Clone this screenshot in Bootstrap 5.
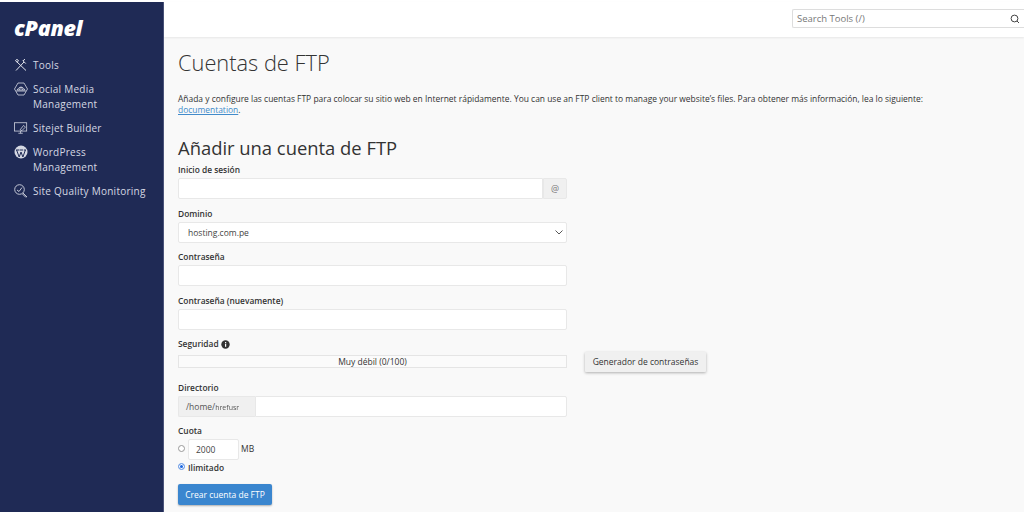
<!DOCTYPE html>
<html lang="es">
<head>
<meta charset="UTF-8">
<title>Cuentas de FTP</title>
<link href="https://cdn.jsdelivr.net/npm/bootstrap@5.3.2/dist/css/bootstrap.min.css" rel="stylesheet">
<style>
html, body { height: 512px; overflow: hidden; }
body { font-family: "Open Sans", sans-serif; font-size: 9px; background: #fff; color: #333; }
.page-wrap { height: 512px; padding-top: 2px; }
.side-bar { width: 164px; background: #1f2a55; color: #d5d8e3; border-right: 1px solid #4a5379; flex: none; }
.brand-logo { font-family: "Open Sans", sans-serif; font-weight: 800; font-style: italic; font-size: 21.5px; color: #fff; line-height: 20px; padding: 16px 0 0 14px; height: 56px; letter-spacing: -.3px; }
.side-item { display: flex; gap: 5px; padding-left: 14px; font-size: 10px; letter-spacing: .25px; line-height: 15px; margin-bottom: 9px; }
.side-item svg { flex: none; width: 14px; height: 14px; }
.top-strip { height: 35px; background: #fff; box-shadow: 0 1px 2px rgba(0,0,0,.08); flex: none; position: relative; }
.search-box { width: 232px; height: 19px; margin-top: 7px; border: 1px solid #ddd; border-right: 0; border-radius: 2px 0 0 2px; font-size: 9.5px; color: #777; padding: 0 4px; line-height: 17px; }
.main-area { background: #f9f9f9; min-width: 0; }
.content-pane { padding: 0 14px; width: 417px; }
.title-one { font-size: 21.8px; font-weight: 300; color: #333; line-height: 32px; margin: 10px 0 0; white-space: nowrap; }
.intro-text { width: 800px; font-size: 8.45px; line-height: 11px; margin: 14px 0 0; color: #333; }
.intro-text a { color: #428bca; }
.title-two { font-size: 18.4px; font-weight: 500; color: #333; line-height: 26px; margin: 20px 0 3px; white-space: nowrap; }
.field-label { font-size: 8.4px; font-weight: 600; line-height: 11px; color: #333; display: block; margin-bottom: 3px; }
.field-group { margin-bottom: 8.6px; }
.field-input { height: 21px; border: 1px solid #e8e8e8; border-radius: 2px; background: #fff; font-size: 8.5px; line-height: 19px; padding: 0 9px; color: #444; }
.select-input { padding-right: 3px; }
.addon-box { width: 24px; background: #f0f0f0; border: 1px solid #e8e8e8; border-radius: 0 2px 2px 0; color: #777; text-align: center; line-height: 19px; height: 21px; }
.meter-label { margin-bottom: 6px; }
.meter-group { margin-top: -.5px; margin-bottom: 13.5px; }
.meter-box { height: 13px; border: 1px solid #e5e5e5; background: #fbfbfb; text-align: center; font-size: 8.5px; line-height: 11px; color: #333; }
.gen-btn { position: absolute; left: 407px; top: -3px; height: 20px; width: 121px; background: #f0f0f0; border: 0; border-radius: 1px; box-shadow: 0 1px 3px rgba(0,0,0,.3); font-size: 8.5px; line-height: 20px; text-align: center; color: #333; white-space: nowrap; padding: 0; }
.prefix-box { width: 77px; background: #f0f0f0; border: 1px solid #e8e8e8; border-right: 0; height: 21px; line-height: 19px; padding-left: 7px; font-size: 8.5px; color: #555; border-radius: 2px 0 0 2px; }
.fuzzy-text { filter: blur(.7px); font-size: 7px; }
.quota-row { gap: 3px; }
.quota-input { width: 51px; height: 21px; border: 1px solid #e8e8e8; border-radius: 2px; background: #fff; line-height: 19px; padding-left: 7px; font-size: 8.5px; color: #444; }
.quota-unit { margin-left: -1px; font-size: 8.5px; }
.radio-dot { width: 7px; height: 7px; border-radius: 50%; border: 1px solid #999; background: #fff; flex: none; margin-top: -2px; }
.radio-on { border: 1px solid #7fa9e8; background: #1a66e0; box-shadow: inset 0 0 0 1px #fff; }
.unlimited-row { margin-top: 1.5px; }
.create-btn { background: #3a86cf; color: #fff; border: 0; border-radius: 2px; height: 21px; width: 94px; font-size: 8.5px; line-height: 21px; padding: 0; box-shadow: 0 1px 2px rgba(0,0,0,.3); white-space: nowrap; margin-top: 11.5px; }
</style>
</head>
<body>
<div class="d-flex page-wrap">
  <nav class="side-bar">
    <div class="brand-logo">cPanel</div>
    <div class="side-item">
      <svg viewBox="0 0 14 14" fill="none" stroke="#e4e6ee" stroke-width="1"><path d="M2 12.5 L10 4 M8.8 2.6 L11.8 5.6 M9 2.8 L11 1.2 M2.5 3.5 L12 12.5 M1.5 2.8 L3 1.2 L4.5 3 L3 4.2 Z"/></svg>
      <span>Tools</span>
    </div>
    <div class="side-item">
      <svg viewBox="0 0 14 14" fill="none" stroke="#d5d8e3" stroke-width=".8"><path d="M4 1 H10 L13.5 7 L10 13 H4 L.5 7 Z"/><path d="M3 8 Q7 2 11 8 Z M5 8 L7 5 L9 8"/><path d="M2 9 H12"/></svg>
      <span>Social Media<br>Management</span>
    </div>
    <div class="side-item">
      <svg viewBox="0 0 16 14" fill="none" stroke="#d5d8e3" stroke-width=".9"><rect x=".5" y="1" width="14" height="9.5"/><path d="M5 13 H10 M7.5 10.5 V13 M7 9 L11 4 L13 6 L9 10 Z"/></svg>
      <span>Sitejet Builder</span>
    </div>
    <div class="side-item">
      <svg viewBox="0 0 14 14"><circle cx="7" cy="7" r="6.5" fill="#d5d8e3"/><path d="M2.6 5 L5.2 12 L7 7 L8.9 12 L11.4 5 M2 5 H5.5 M6 5 H9.2 M10 5 H12" fill="none" stroke="#1f2a55" stroke-width="1"/></svg>
      <span>WordPress<br>Management</span>
    </div>
    <div class="side-item">
      <svg viewBox="0 0 14 14" fill="none" stroke="#d5d8e3" stroke-width=".9"><circle cx="5.5" cy="5.5" r="4.8"/><path d="M3 6 L5 7.5 L8 3.5 M9 9 L13 13 M8.5 10 L12 13.5"/></svg>
      <span>Site Quality Monitoring</span>
    </div>
  </nav>
  <div class="main-area flex-grow-1 d-flex flex-column">
    <header class="top-strip d-flex justify-content-end">
      <div class="search-box d-flex justify-content-between align-items-center">
        <span>Search Tools (/)</span>
        <svg width="10" height="10" viewBox="0 0 10 10" fill="none" stroke="#444" stroke-width="1"><circle cx="4.5" cy="4.5" r="3.4"/><path d="M7 7 L9 9"/></svg>
      </div>
    </header>
    <main class="content-pane">
      <h1 class="title-one">Cuentas de FTP</h1>
      <p class="intro-text">Añada y configure las cuentas FTP para colocar su sitio web en Internet rápidamente. You can use an FTP client to manage your website’s files. Para obtener más información, lea lo siguiente: <a href="#">documentation</a>.</p>
      <h2 class="title-two">Añadir una cuenta de FTP</h2>
      <div class="field-group">
        <label class="field-label">Inicio de sesión</label>
        <div class="d-flex"><div class="field-input flex-grow-1 rounded-end-0"></div><div class="addon-box">@</div></div>
      </div>
      <div class="field-group">
        <label class="field-label">Dominio</label>
        <div class="field-input select-input d-flex justify-content-between align-items-center"><span>hosting.com.pe</span>
          <svg width="8" height="5" viewBox="0 0 8 5" fill="none" stroke="#444" stroke-width=".9"><path d="M.5 .5 L4 4 L7.5 .5"/></svg></div>
      </div>
      <div class="field-group">
        <label class="field-label">Contraseña</label>
        <div class="field-input"></div>
      </div>
      <div class="field-group">
        <label class="field-label">Contraseña (nuevamente)</label>
        <div class="field-input"></div>
      </div>
      <div class="meter-group">
        <label class="field-label meter-label">Seguridad
          <svg width="9" height="9" viewBox="0 0 9 9"><circle cx="4.5" cy="4.5" r="4.2" fill="#333"/><rect x="4" y="3.8" width="1.2" height="3" fill="#fff"/><rect x="4" y="2" width="1.2" height="1.2" fill="#fff"/></svg>
        </label>
        <div class="position-relative">
          <div class="meter-box">Muy débil (0/100)</div>
          <button class="gen-btn">Generador de contraseñas</button>
        </div>
      </div>
      <div class="field-group">
        <label class="field-label">Directorio</label>
        <div class="d-flex"><div class="prefix-box">/home/<span class="fuzzy-text">hrefusr</span></div><div class="field-input flex-grow-1 rounded-start-0"></div></div>
      </div>
      <label class="field-label">Cuota</label>
      <div class="d-flex align-items-center quota-row"><span class="radio-dot"></span><span class="quota-input">2000</span><span class="quota-unit">MB</span></div>
      <div class="d-flex align-items-center quota-row unlimited-row"><span class="radio-dot radio-on"></span><span class="field-label mb-0">Ilimitado</span></div>
      <button class="create-btn">Crear cuenta de FTP</button>
    </main>
  </div>
</div>
</body>
</html>
